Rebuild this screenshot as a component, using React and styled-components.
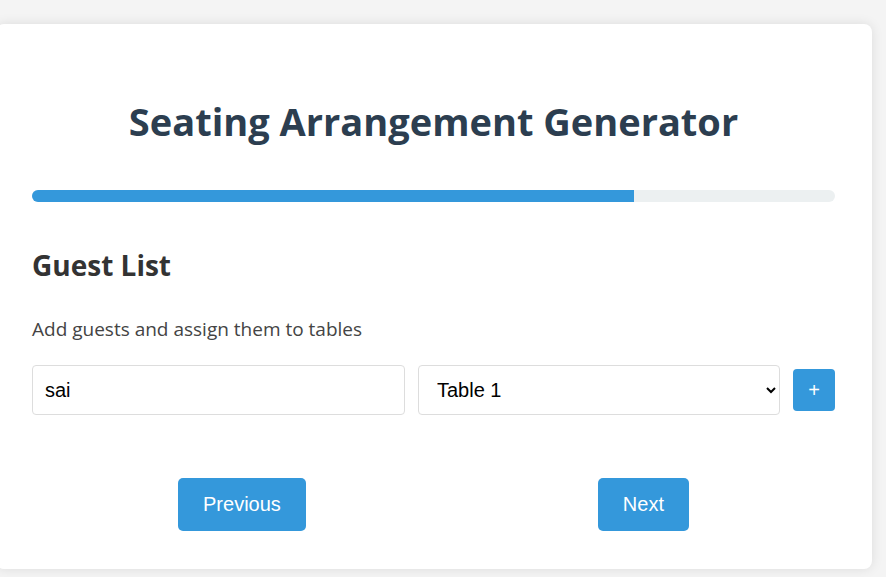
import React, { useState } from "react"
import styled, { createGlobalStyle } from "styled-components"

const GlobalStyle = createGlobalStyle`
  html, body {
    margin: 0;
    padding: 0;
    background: #f4f4f4;
    overflow: hidden;
  }
  body {
    font-family: "Open Sans", "Noto Sans", sans-serif;
  }
`

const tables = ["Table 1", "Table 2", "Table 3", "Table 4"]

export default function App() {
  const [guest, setGuest] = useState("sai")
  const [table, setTable] = useState("Table 1")
  const progress = 75

  return (
    <>
      <GlobalStyle />
      <Page>
        <Card>
          <Title>Seating Arrangement Generator</Title>

          <ProgressTrack>
            <ProgressFill style={{ width: `${progress}%` }} />
          </ProgressTrack>

          <SectionTitle>Guest List</SectionTitle>
          <Hint>Add guests and assign them to tables</Hint>

          <GuestRow>
            <TextInput value={guest} onChange={(e) => setGuest(e.target.value)} />
            <Select value={table} onChange={(e) => setTable(e.target.value)}>
              {tables.map((t) => (
                <option key={t}>{t}</option>
              ))}
            </Select>
            <AddButton>+</AddButton>
          </GuestRow>

          <NavRow>
            <NavButton>Previous</NavButton>
            <NavButton>Next</NavButton>
          </NavRow>
        </Card>
      </Page>
    </>
  )
}

const Page = styled.div`
  padding-top: 24px;
  padding-bottom: 8px;
  margin-left: -4px;
  width: 876px;
`
const Card = styled.div`
  background: #fff;
  border-radius: 8px;
  box-shadow: 0 0 12px rgba(0, 0, 0, 0.1);
  padding: 74px 37px 38px 36px;
  display: flex;
  flex-direction: column;
`
const Title = styled.h1`
  margin: 0;
  font-size: 38px;
  line-height: 46px;
  font-weight: 700;
  color: #2c3e50;
  text-align: center;
`
const ProgressTrack = styled.div`
  margin-top: 46px;
  height: 12px;
  border-radius: 6px;
  background: #ecf0f1;
  overflow: hidden;
`
const ProgressFill = styled.div`
  height: 100%;
  background: #3498db;
`
const SectionTitle = styled.h2`
  margin: 46px 0 0;
  font-size: 28px;
  line-height: 34px;
  font-weight: 700;
  color: #333;
`
const Hint = styled.p`
  margin: 35px 0 0;
  font-size: 19px;
  line-height: 24px;
  color: #444;
`
const GuestRow = styled.div`
  margin-top: 24px;
  display: grid;
  grid-template-columns: 1fr 362px 42px;
  column-gap: 13px;
  align-items: center;
`
const TextInput = styled.input`
  box-sizing: border-box;
  height: 50px;
  padding: 0 12px;
  border: 1px solid #ddd;
  border-radius: 4px;
  font-family: "Liberation Sans", Arial, sans-serif;
  font-size: 20px;
  color: #000;
  outline: none;
  min-width: 0;
`
const Select = styled.select`
  box-sizing: border-box;
  height: 50px;
  padding: 0 8px 0 14px;
  border: 1px solid #ddd;
  border-radius: 4px;
  background: #fff;
  font-family: "Liberation Sans", Arial, sans-serif;
  font-size: 20px;
  color: #000;
  outline: none;
`
const AddButton = styled.button`
  height: 42px;
  width: 42px;
  border: none;
  border-radius: 4px;
  background: #3498db;
  color: #fff;
  font-family: "Liberation Sans", Arial, sans-serif;
  font-size: 20px;
  cursor: pointer;
`
const NavRow = styled.div`
  margin-top: 63px;
  display: flex;
  justify-content: space-around;
`
const NavButton = styled.button`
  padding: 15px 25px;
  border: none;
  border-radius: 5px;
  background: #3498db;
  color: #fff;
  font-family: "Liberation Sans", Arial, sans-serif;
  font-size: 20px;
  line-height: 23px;
  cursor: pointer;
`
